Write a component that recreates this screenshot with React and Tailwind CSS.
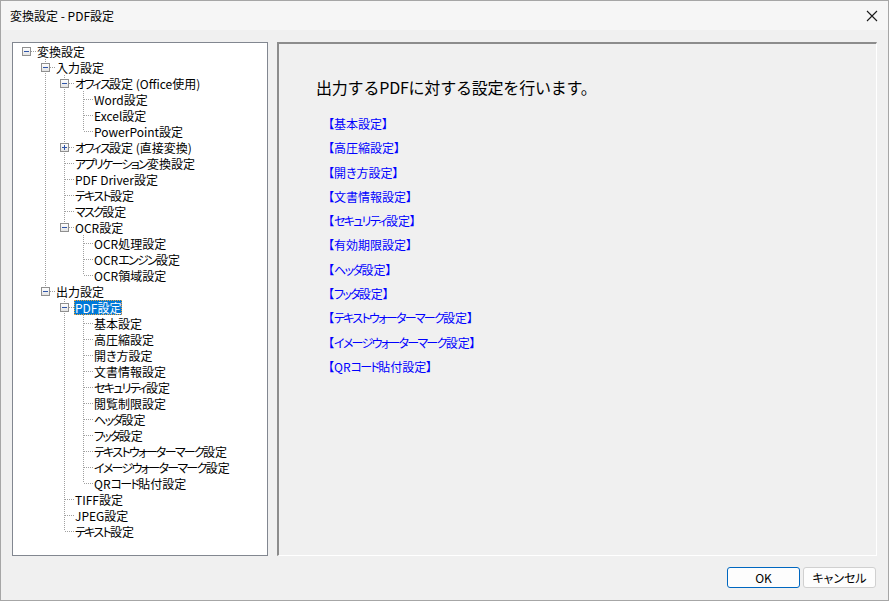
// Dialog: 変換設定 - PDF設定

const FONT = "font-['Meiryo_UI','Noto_Sans_CJK_JP',sans-serif]";

// ── Tree data ─────────────────────────────────────────────────────────────────
const tree = [
    {
        label: '変換設定',
        children: [
            {
                label: '入力設定',
                children: [
                    {
                        label: 'オフィス設定 (Office使用)',
                        children: [{ label: 'Word設定' }, { label: 'Excel設定' }, { label: 'PowerPoint設定' }],
                    },
                    { label: 'オフィス設定 (直接変換)', collapsed: true, children: [{ label: '-' }] },
                    { label: 'アプリケーション変換設定' },
                    { label: 'PDF Driver設定' },
                    { label: 'テキスト設定' },
                    { label: 'マスク設定' },
                    {
                        label: 'OCR設定',
                        children: [{ label: 'OCR処理設定' }, { label: 'OCRエンジン設定' }, { label: 'OCR領域設定' }],
                    },
                ],
            },
            {
                label: '出力設定',
                children: [
                    {
                        label: 'PDF設定',
                        selected: true,
                        children: [
                            { label: '基本設定' },
                            { label: '高圧縮設定' },
                            { label: '開き方設定' },
                            { label: '文書情報設定' },
                            { label: 'セキュリティ設定' },
                            { label: '閲覧制限設定' },
                            { label: 'ヘッダ設定' },
                            { label: 'フッタ設定' },
                            { label: 'テキストウォーターマーク設定' },
                            { label: 'イメージウォーターマーク設定' },
                            { label: 'QRコード貼付設定' },
                        ],
                    },
                    { label: 'TIFF設定' },
                    { label: 'JPEG設定' },
                    { label: 'テキスト設定' },
                ],
            },
        ],
    },
];

const links = [
    '【基本設定】',
    '【高圧縮設定】',
    '【開き方設定】',
    '【文書情報設定】',
    '【セキュリティ設定】',
    '【有効期限設定】',
    '【ヘッダ設定】',
    '【フッタ設定】',
    '【テキストウォーターマーク設定】',
    '【イメージウォーターマーク設定】',
    '【QRコード貼付設定】',
];

function flatten(nodes, depth = 0, guides = [], out = []) {
    nodes.forEach((n, i) => {
        const hasNext = i < nodes.length - 1;
        out.push({ ...n, depth, guides, hasNext, first: depth === 0 && i === 0 });
        if (n.children && !n.collapsed) flatten(n.children, depth + 1, [...guides, hasNext], out);
    });
    return out;
}

// katakana in the original UI font is narrower — tighten those runs
function Kana({ text }) {
    return text.split(/([\u30A0-\u30FF]+)/).map((part, i) =>
        /[\u30A0-\u30FF]/.test(part) ? (
            <span key={i} className="tracking-[-1.7px]">
                {part}
            </span>
        ) : (
            <span key={i}>{part}</span>
        )
    );
}

const LINE = '#a0a0a0';

// ── Tree line pieces ──────────────────────────────────────────────────────────
function Guide({ line }) {
    return (
        <svg width="19" height="16" className="shrink-0">
            {line && <line x1="9.5" y1="0" x2="9.5" y2="16" stroke={LINE} strokeDasharray="1 1" />}
        </svg>
    );
}

function Connector({ top, bottom, box }) {
    return (
        <svg width="19" height="16" className="shrink-0">
            {top && <line x1="9.5" y1="0" x2="9.5" y2="8" stroke={LINE} strokeDasharray="1 1" />}
            {bottom && <line x1="9.5" y1="8" x2="9.5" y2="16" stroke={LINE} strokeDasharray="1 1" />}
            <line x1="10" y1="8.5" x2="19" y2="8.5" stroke={LINE} strokeDasharray="1 1" />
            {box && (
                <>
                    <defs>
                        <linearGradient id="bx" x1="0" y1="0" x2="0" y2="1">
                            <stop offset="0" stopColor="#ffffff" />
                            <stop offset="1" stopColor="#e2e2e2" />
                        </linearGradient>
                    </defs>
                    <rect x="5.5" y="4.5" width="8" height="8" fill="url(#bx)" stroke="#8f8f8f" />
                    <line x1="7" y1="8.5" x2="12" y2="8.5" stroke="#2f55a8" />
                    {box === 'plus' && <line x1="9.5" y1="6" x2="9.5" y2="11" stroke="#2f55a8" />}
                </>
            )}
        </svg>
    );
}

function TreeRow({ row }) {
    return (
        <div className="flex h-4 items-center">
            {row.guides.map((g, i) => (
                <Guide key={i} line={g} />
            ))}
            <Connector
                top={!row.first}
                bottom={row.hasNext}
                box={row.children ? (row.collapsed ? 'plus' : 'minus') : null}
            />
            <span
                className={`px-px h-[15px] leading-[15px] whitespace-nowrap ${
                    row.selected
                        ? 'bg-[#0078d7] text-white outline outline-1 outline-dotted outline-[#e8a33d] -outline-offset-1'
                        : 'text-black'
                }`}
            >
                <Kana text={row.label} />
            </span>
        </div>
    );
}

// ── App ───────────────────────────────────────────────────────────────────────
export default function App() {
    const rows = flatten(tree);
    return (
        <div
            className={`w-[889px] h-[601px] bg-[#f0f0f0] border border-[#a6a6a6] flex flex-col text-[12px] [font-feature-settings:'palt'] ${FONT}`}
        >
            {/* Title bar */}
            <div className="h-[29px] bg-[#f6f6f6] flex items-center justify-between pl-[9px] pr-[9px]">
                <span className="text-[12px] text-black">変換設定 - PDF設定</span>
                <svg width="12" height="12" viewBox="0 0 12 12" className="mr-px">
                    <path d="M1 1 L11 11 M11 1 L1 11" stroke="#1a1a1a" strokeWidth="1.1" />
                </svg>
            </div>

            {/* Body */}
            <div className="flex gap-[9px] pt-[12px] pl-[11px] pr-[11px]">
                {/* Tree */}
                <div className="w-[256px] h-[514px] bg-white border border-[#828790] pl-1 overflow-hidden">
                    {rows.map((r, i) => (
                        <TreeRow key={i} row={r} />
                    ))}
                </div>

                {/* Settings pane */}
                <div className="w-[600px] h-[514px] border-t-2 border-l-2 border-t-[#8c8c8c] border-l-[#8c8c8c] border-b border-r border-b-white border-r-white pt-[31px] pl-[37px]">
                    <div className="text-[16px] leading-[24px] text-black tracking-[-0.2px] [font-feature-settings:normal]">
                        出力するPDFに対する設定を行います。
                    </div>
                    <div className="mt-[13px] ml-[12px] flex flex-col">
                        {links.map((l) => (
                            <div key={l} className="h-[24.3px] leading-[24.3px] text-[#0000ff] cursor-pointer">
                                <Kana text={l} />
                            </div>
                        ))}
                    </div>
                </div>
            </div>

            {/* Buttons */}
            <div className="flex justify-end gap-[3px] pt-[11px] pr-[12px]">
                <button className="w-[73px] h-[21px] bg-[#fdfdfd] border border-[#0067c0] rounded-[3px] text-[12px] text-black leading-none">
                    OK
                </button>
                <button className="w-[73px] h-[21px] bg-[#fdfdfd] border border-[#d0d0d0] rounded-[3px] text-[12px] text-black leading-none">
                    キャンセル
                </button>
            </div>
        </div>
    );
}
